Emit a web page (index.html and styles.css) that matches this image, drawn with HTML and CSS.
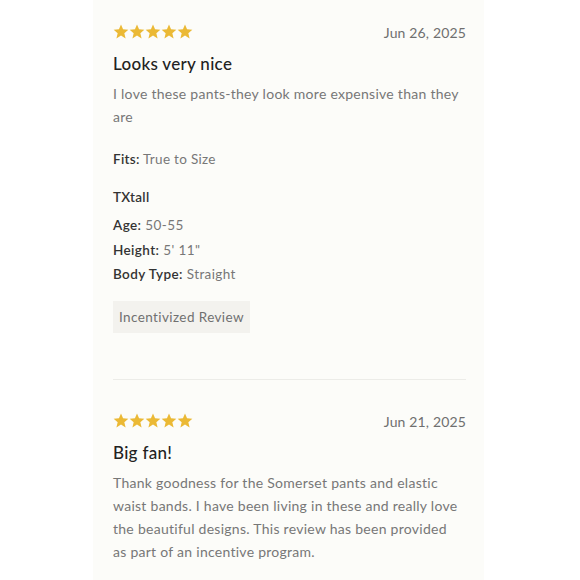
FILE: index.html
```html
<!DOCTYPE html>
<html>
<head>
<meta charset="utf-8">
<link rel="stylesheet" href="styles.css">
</head>
<body>
<div class="panel">
  <div class="review">
    <div class="head">
      <div class="stars">
        <svg viewBox="0 0 24 24" class="star"><path d="M12 .6l3.1 7.4 7.9.6-6 5.2 1.9 7.8L12 17.4l-6.9 4.2L7 13.8l-6-5.2L8.9 8z"/></svg>
        <svg viewBox="0 0 24 24" class="star"><path d="M12 .6l3.1 7.4 7.9.6-6 5.2 1.9 7.8L12 17.4l-6.9 4.2L7 13.8l-6-5.2L8.9 8z"/></svg>
        <svg viewBox="0 0 24 24" class="star"><path d="M12 .6l3.1 7.4 7.9.6-6 5.2 1.9 7.8L12 17.4l-6.9 4.2L7 13.8l-6-5.2L8.9 8z"/></svg>
        <svg viewBox="0 0 24 24" class="star"><path d="M12 .6l3.1 7.4 7.9.6-6 5.2 1.9 7.8L12 17.4l-6.9 4.2L7 13.8l-6-5.2L8.9 8z"/></svg>
        <svg viewBox="0 0 24 24" class="star"><path d="M12 .6l3.1 7.4 7.9.6-6 5.2 1.9 7.8L12 17.4l-6.9 4.2L7 13.8l-6-5.2L8.9 8z"/></svg>
      </div>
      <div class="date">Jun 26, 2025</div>
    </div>
    <h2 class="title">Looks very nice</h2>
    <p class="body">I love these pants-they look more expensive than they are</p>
    <p class="fits"><span class="label">Fits:</span> True to Size</p>
    <div class="author">TXtall</div>
    <div class="attrs">
      <div class="attr"><span class="label">Age:</span> 50-55</div>
      <div class="attr"><span class="label">Height:</span> 5' 11"</div>
      <div class="attr"><span class="label">Body Type:</span> Straight</div>
    </div>
    <div class="badge">Incentivized Review</div>
  </div>
  <div class="divider"></div>
  <div class="review second">
    <div class="head">
      <div class="stars">
        <svg viewBox="0 0 24 24" class="star"><path d="M12 .6l3.1 7.4 7.9.6-6 5.2 1.9 7.8L12 17.4l-6.9 4.2L7 13.8l-6-5.2L8.9 8z"/></svg>
        <svg viewBox="0 0 24 24" class="star"><path d="M12 .6l3.1 7.4 7.9.6-6 5.2 1.9 7.8L12 17.4l-6.9 4.2L7 13.8l-6-5.2L8.9 8z"/></svg>
        <svg viewBox="0 0 24 24" class="star"><path d="M12 .6l3.1 7.4 7.9.6-6 5.2 1.9 7.8L12 17.4l-6.9 4.2L7 13.8l-6-5.2L8.9 8z"/></svg>
        <svg viewBox="0 0 24 24" class="star"><path d="M12 .6l3.1 7.4 7.9.6-6 5.2 1.9 7.8L12 17.4l-6.9 4.2L7 13.8l-6-5.2L8.9 8z"/></svg>
        <svg viewBox="0 0 24 24" class="star"><path d="M12 .6l3.1 7.4 7.9.6-6 5.2 1.9 7.8L12 17.4l-6.9 4.2L7 13.8l-6-5.2L8.9 8z"/></svg>
      </div>
      <div class="date">Jun 21, 2025</div>
    </div>
    <h2 class="title">Big fan!</h2>
    <p class="body">Thank goodness for the Somerset pants and elastic waist bands. I have been living in these and really love the beautiful designs. This review has been provided as part of an incentive program.</p>
  </div>
</div>
</body>
</html>
```
FILE: styles.css
```css
html, body {
  margin: 0;
  padding: 0;
  background: #ffffff;
}
body {
  font-family: "Lato", "Liberation Sans", sans-serif;
  width: 580px;
  height: 580px;
  overflow: hidden;
}
.panel {
  margin-left: 93px;
  width: 391px;
  height: 580px;
  background: #fcfcf9;
  padding: 0 18px 0 20px;
  box-sizing: border-box;
}
.review {
  padding-top: 23px;
}
.review.second {
  padding-top: 32px;
}
.head {
  display: flex;
  justify-content: space-between;
  align-items: center;
  height: 18px;
}
.stars {
  display: flex;
}
.star {
  width: 16px;
  height: 16px;
  fill: #ebb935;
}
.date {
  font-size: 14px;
  color: #6f6f6f;
  letter-spacing: 0.15px;
}
.title {
  margin: 12px 0 0;
  font-size: 17px;
  font-weight: 500;
  color: #222;
  line-height: 22px;
  letter-spacing: 0.3px;
}
.body {
  margin: 7px 0 0;
  max-width: 348px;
  font-size: 14px;
  line-height: 23px;
  color: #777;
  letter-spacing: 0.27px;
}
.fits {
  margin: 21px 0 0;
  font-size: 13.5px;
  color: #777;
  line-height: 20px;
  letter-spacing: 0.3px;
}
.label {
  color: #333;
  font-weight: 600;
}
.author {
  margin-top: 18px;
  font-size: 13.5px;
  color: #333;
  font-weight: 600;
  line-height: 20px;
  letter-spacing: 0.3px;
}
.attrs {
  margin-top: 8px;
  display: flex;
  flex-direction: column;
  gap: 4.5px;
}
.attr {
  font-size: 13.5px;
  color: #777;
  line-height: 20px;
  letter-spacing: 0.4px;
}
.badge {
  display: inline-block;
  margin-top: 17px;
  background: #f3f2ee;
  color: #707070;
  font-size: 13.5px;
  line-height: 32px;
  padding: 0 6px;
  letter-spacing: 0.4px;
}
.divider {
  margin-top: 46px;
  height: 1px;
  background: #ecece8;
}
```
